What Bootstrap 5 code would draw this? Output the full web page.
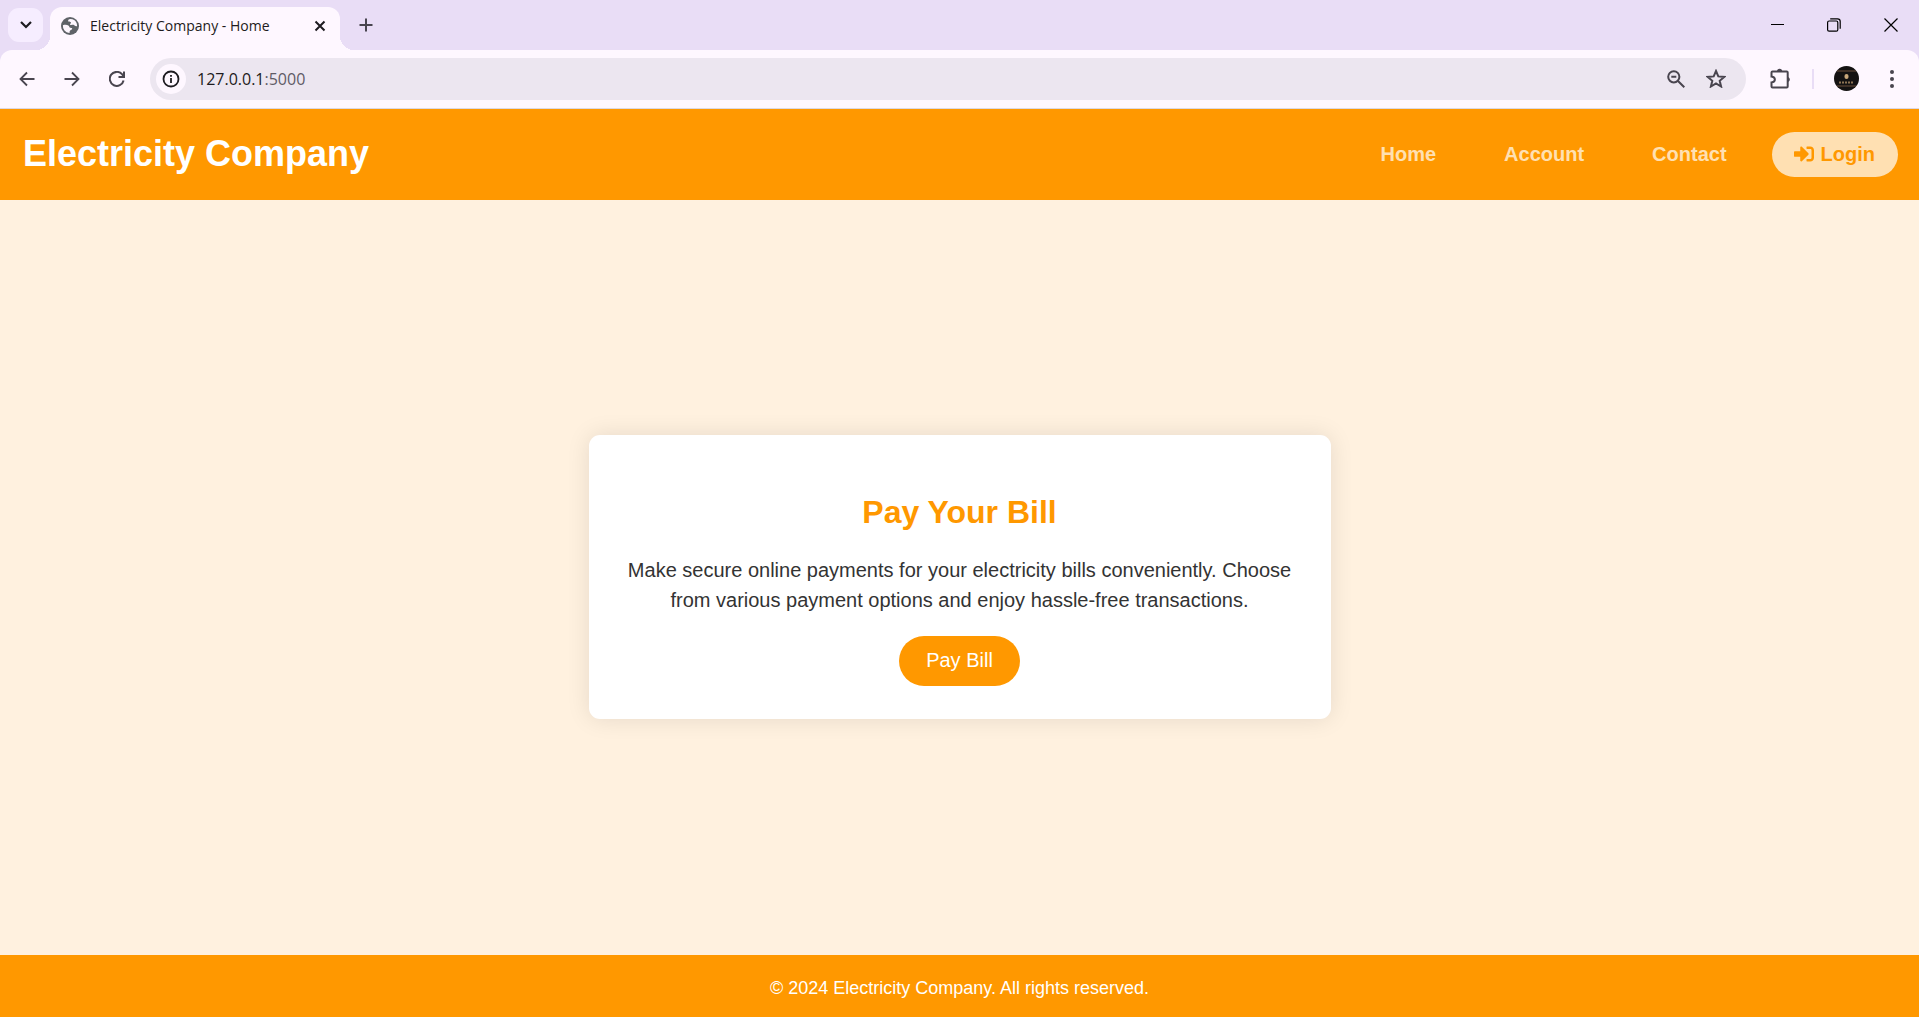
<!DOCTYPE html>
<html lang="en">
<head>
<meta charset="utf-8">
<meta name="viewport" content="width=device-width, initial-scale=1">
<title>Electricity Company - Home</title>
<link href="https://cdn.jsdelivr.net/npm/bootstrap@5.3.0/dist/css/bootstrap.min.css" rel="stylesheet">
<style>
  body { font-family: "Liberation Sans", Arial, sans-serif; background: #fff1df; color: #333; }
  .browser-ui { font-family: "Open Sans", "Noto Sans", sans-serif; background: #fef7ff; color: #1d1b20; }
  .browser-ui button { border: 0; background: none; padding: 0; color: #49454f; display: flex; align-items: center; justify-content: center; flex: none; }
  .browser-ui svg, .site-header svg { display: block; flex: none; }
  .tab-strip { height: 50px; background: #e9ddf6; padding-left: 8px; }
  .browser-ui .tab-search { width: 35px; height: 34px; margin-top: 8px; border-radius: 11px; background: #f6edff; color: #1d1b20; }
  .active-tab { width: 290px; height: 43px; margin: 7px 0 0 7px; padding: 0 14px 6px 11px; border-radius: 12px 12px 0 0; background: #fef7ff; position: relative; font-size: 14px; }
  .active-tab::before, .active-tab::after { content: ""; position: absolute; bottom: 0; width: 14px; height: 14px; }
  .active-tab::before { left: -14px; background: radial-gradient(circle at 0 0, transparent 14px, #fef7ff 14px); }
  .active-tab::after { right: -14px; background: radial-gradient(circle at 100% 0, transparent 14px, #fef7ff 14px); }
  .tab-title { margin-left: 11px; }
  .browser-ui .new-tab { width: 34px; height: 34px; margin: 8px 0 0 9px; }
  .browser-ui .window-btn { width: 57px; height: 49px; color: #000; }
  .toolbar-wrap { background: #e9ddf6; }
  .toolbar { height: 59px; padding: 8px 10px 9px 11px; background: #fef7ff; border-radius: 12px 12px 0 0; border-bottom: 1px solid #dcd8e2; }
  .browser-ui .nav-btn { width: 45px; height: 40px; padding-right: 14px; }
  .address-bar { height: 42px; border-radius: 21px; background: #ece6f0; padding: 0 12px 0 6px; margin-left: 4px; }
  .browser-ui .site-info { width: 30px; height: 30px; border-radius: 50%; background: #fef7ff; color: #1d1b20; }
  .address-text { font-size: 16px; margin-left: 11px; }
  .address-text span { color: #5f5b66; }
  .tool-divider { width: 2px; height: 20px; background: #e9ddf6; margin-left: 21px; }
  .browser-ui .zoom-btn { margin-right: 21px; }
  .site-header { background: #ff9800; height: 91px; padding: 0 21px 0 23px; }
  .site-title { font-size: 36px; font-weight: 700; color: #fff; padding-bottom: 2px; }
  .site-nav { font-size: 20px; font-weight: 700; gap: 68px; }
  .site-nav a { color: #ffe0b2; text-decoration: none; padding-bottom: 2px; }
  .site-nav .login-link { background: #ffe0b2; color: #ff9800; height: 45px; padding: 0 23px 2px 22px; margin-left: -23px; border-radius: 23px; gap: 7px; }
  .bill-main { padding-bottom: 1px; }
  .bill-card { width: 742px; max-width: 100%; border: 0; border-radius: 11px; padding: 56px 34px 33px; box-shadow: 0 0 23px rgba(0,0,0,.1); color: #333; font-size: 20px; line-height: 30px; }
  .bill-card h2 { font-size: 32px; line-height: 42px; font-weight: 700; color: #ff9800; margin-bottom: 22px; }
  .bill-card p { margin-bottom: 21px; }
  .bill-card .pay-btn { background: #ff9800; color: #fff; font-size: 20px; line-height: 24px; padding: 12px 27px 14px; border: 0; border-radius: 25px; }
  .site-footer { background: #ff9800; color: #fff; height: 62px; font-size: 18px; padding-top: 4px; }
  .page-end { height: 4px; background: #fff; }
</style>
</head>
<body class="d-flex flex-column min-vh-100">
<div class="browser-ui">
  <div class="tab-strip d-flex">
    <button class="tab-search" type="button" aria-label="Search tabs"><svg width="12" height="8" viewBox="0 0 12 8" fill="none" stroke="currentColor" stroke-width="2.2"><path d="M1 1l5 5 5-5"/></svg></button>
    <div class="active-tab d-flex align-items-center">
      <svg width="18" height="18" viewBox="0 0 18 18"><circle cx="9" cy="9" r="9" fill="#5f6368"/><path d="M9.5 2c-2.2 0-2.6 1-2.2 2.2.3 1 2.400 0 2.700 1.200.2 1-1.700 1.400-.8 2.300.7.7 2.900-.3 3.800.4.9.8 1.500 1.400 3.100.9A7.200 7.200 0 0 0 11.500 2.200zM1.900 8.200c1.800-.6 4.300-.5 5.400.2 1.200.7.8 2 2 2.300 1 .3 2.200 0 1.900 1.400-.3 1-2.200 1-2.500 2.100-.2.700.2 1.300-.4 1.900A7.200 7.200 0 0 1 1.900 8.200z" fill="#fef7ff"/></svg>
      <span class="tab-title flex-grow-1 text-nowrap">Electricity Company - Home</span>
      <button type="button" aria-label="Close tab"><svg width="12" height="12" viewBox="0 0 12 12" fill="none" stroke="#1d1b20" stroke-width="2"><path d="M1.500 1.500l9 9m0-9l-9 9"/></svg></button>
    </div>
    <button class="new-tab" type="button" aria-label="New tab"><svg width="14" height="14" viewBox="0 0 14 14" stroke="currentColor" stroke-width="2"><path d="M7 .5v13M.5 7h13"/></svg></button>
    <div class="d-flex ms-auto">
      <button class="window-btn" type="button" aria-label="Minimize"><svg width="14" height="14" viewBox="0 0 14 14" stroke="currentColor"><path d="M1 6.500h13"/></svg></button>
      <button class="window-btn" type="button" aria-label="Restore"><svg width="14" height="14" viewBox="0 0 14 14" fill="none" stroke="currentColor" stroke-width="1.200"><rect x=".6" y="3" width="10.200" height="10.200" rx="1.500"/><path d="M3.200.8h7.300q2.700 0 2.700 2.700v7.300"/></svg></button>
      <button class="window-btn" type="button" aria-label="Close"><svg width="14" height="14" viewBox="0 0 14 14" stroke="currentColor" stroke-width="1.200"><path d="M.5.5l13 13m0-13l-13 13"/></svg></button>
    </div>
  </div>
  <div class="toolbar-wrap">
    <div class="toolbar d-flex align-items-center">
      <button class="nav-btn" type="button" aria-label="Back"><svg width="16" height="16" viewBox="0 0 16 16" fill="none" stroke="currentColor" stroke-width="1.800"><path d="M8 1.500L1.500 8 8 14.500M1.500 8H15.500"/></svg></button>
      <button class="nav-btn" type="button" aria-label="Forward"><svg width="16" height="16" viewBox="0 0 16 16" fill="none" stroke="currentColor" stroke-width="1.800"><path d="M8 1.500l6.500 6.500L8 14.500M14.500 8H.5"/></svg></button>
      <button class="nav-btn" type="button" aria-label="Reload"><svg width="16" height="16" viewBox="0 0 16 16" fill="none" stroke="currentColor" stroke-width="2"><path d="M14.600 9.500A7 7 0 1 1 13 3.200L14.500 5"/><path d="M15 .5V6H9.500"/></svg></button>
      <div class="address-bar d-flex align-items-center flex-grow-1">
        <button class="site-info" type="button" aria-label="Site information"><svg width="18" height="18" viewBox="0 0 18 18" fill="none" stroke="currentColor" stroke-width="1.800"><circle cx="9" cy="9" r="7.500"/><path d="M9 8v5M9 5v1.800"/></svg></button>
        <div class="address-text flex-grow-1">127.0.0.1<span>:5000</span></div>
        <button type="button" class="zoom-btn" aria-label="Zoom"><svg width="18" height="18" viewBox="0 0 18 18" fill="none" stroke="currentColor" stroke-width="2"><circle cx="6.800" cy="6.800" r="5.600"/><path d="M11 11l6.300 6.300M4.300 6.800h5"/></svg></button>
        <button type="button" class="me-2" aria-label="Bookmark"><svg width="20" height="19" viewBox="0 0 20 19" fill="none" stroke="currentColor" stroke-width="2"><path d="M10 2l2.300 5.400 5.900.5-4.500 3.900 1.400 5.700-5.100-3-5.100 3 1.400-5.700-4.500-3.900 5.900-.5z"/></svg></button>
      </div>
      <button type="button" class="ms-4" aria-label="Extensions"><svg width="21" height="21" viewBox="0 0 21 21" fill="none" stroke="currentColor" stroke-width="2"><path d="M2.500 3.500h14.200q1 0 1 1v14q0 1-1 1H2.500q-1 0-1-1v-4c4.500-.5 4.500-5.500 0-6v-4q0-1 1-1z"/><path d="M7 3.300a2.600 2.600 0 0 1 5.200 0zM18 9a2.600 2.600 0 0 1 0 5z" fill="currentColor" stroke="none"/></svg></button>
      <span class="tool-divider me-3"></span>
      <button type="button" class="ms-1" aria-label="Profile"><svg width="25" height="25" viewBox="0 0 25 25"><circle cx="12.500" cy="12.500" r="12.500" fill="#141212"/><path d="M3 5h19M3 20h19" stroke="#6b4f3a"/><rect x="10.500" y="8" width="4" height="5" rx="2" fill="#c9a77a"/><path d="M5 16.500h15" stroke="#8d7455" stroke-width="2" stroke-dasharray="2 1"/></svg></button>
      <button type="button" class="ms-4 me-2" aria-label="Menu"><svg width="18" height="18" viewBox="0 0 18 18" fill="currentColor"><circle cx="9" cy="2" r="2"/><circle cx="9" cy="9" r="2"/><circle cx="9" cy="16" r="2"/></svg></button>
    </div>
  </div>
</div>
<header class="site-header d-flex align-items-center justify-content-between">
  <h1 class="site-title m-0">Electricity Company</h1>
  <nav class="site-nav d-flex align-items-center">
    <a href="#">Home</a>
    <a href="#">Account</a>
    <a href="#">Contact</a>
    <a href="#" class="login-link d-flex align-items-center"><svg width="20" height="20" viewBox="0 0 512 512" fill="currentColor"><path d="M416 448h-84c-6.600 0-12-5.400-12-12v-40c0-6.600 5.400-12 12-12h84c17.700 0 32-14.300 32-32V160c0-17.700-14.300-32-32-32h-84c-6.600 0-12-5.400-12-12V76c0-6.600 5.400-12 12-12h84c53 0 96 43 96 96v192c0 53-43 96-96 96zm-47-209L201 71c-15-15-41-4.500-41 17v96H24c-13.300 0-24 10.700-24 24v96c0 13.300 10.700 24 24 24h136v96c0 21.500 26 32 41 17l168-168c9.300-9.400 9.300-24.600 0-34z"/></svg>Login</a>
  </nav>
</header>
<main class="bill-main flex-grow-1 d-flex align-items-center justify-content-center">
  <section class="card bill-card text-center">
    <h2>Pay Your Bill</h2>
    <p>Make secure online payments for your electricity bills conveniently. Choose from various payment options and enjoy hassle-free transactions.</p>
    <div><button type="button" class="btn pay-btn">Pay Bill</button></div>
  </section>
</main>
<footer class="site-footer d-flex align-items-center justify-content-center">© 2024 Electricity Company. All rights reserved.</footer>
<div class="page-end"></div>
<script src="https://cdn.jsdelivr.net/npm/bootstrap@5.3.0/dist/js/bootstrap.bundle.min.js"></script>
</body>
</html>
